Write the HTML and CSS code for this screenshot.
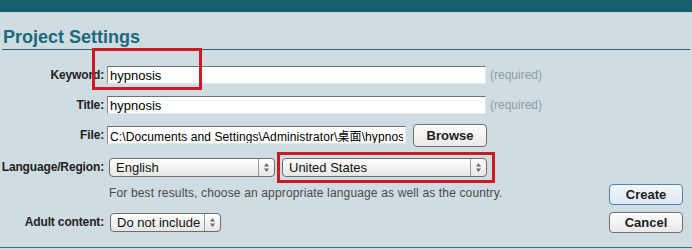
FILE: index.html
```html
<!DOCTYPE html>
<html lang="en">
<head>
    <meta charset="UTF-8">
    <title>Project Settings</title>
    <link rel="stylesheet" href="styles.css">
</head>
<body>
<div class="page">
    <div class="topbar"></div>
    <h1 class="title">Project Settings</h1>

    <div class="form">
        <div class="row">
            <label class="lbl">Keyword:</label>
            <input class="txt wide" type="text" value="hypnosis">
            <span class="req">(required)</span>
        </div>
        <div class="row">
            <label class="lbl">Title:</label>
            <input class="txt wide" type="text" value="hypnosis">
            <span class="req">(required)</span>
        </div>
        <div class="row">
            <label class="lbl">File:</label>
            <input class="txt file" type="text" value="C:\Documents and Settings\Administrator\桌面\hypnosis.html">
            <button class="btn browse">Browse</button>
        </div>
        <div class="row lang">
            <label class="lbl">Language/Region:</label>
            <div class="sel sel-lang">
                <span class="sel-text">English</span>
                <span class="sel-arrows"><svg width="7" height="11" viewBox="0 0 7 11"><path d="M3.5 1 L6 4.5 H1 Z M3.5 10 L6 6.5 H1 Z" fill="#6b6b6b"/></svg></span>
            </div>
            <div class="sel sel-region">
                <span class="sel-text">United States</span>
                <span class="sel-arrows"><svg width="7" height="11" viewBox="0 0 7 11"><path d="M3.5 1 L6 4.5 H1 Z M3.5 10 L6 6.5 H1 Z" fill="#6b6b6b"/></svg></span>
            </div>
        </div>
        <div class="row help">
            <span class="lbl"></span>
            <span class="hint">For best results, choose an appropriate language as well as the country.</span>
            <button class="btn action create">Create</button>
        </div>
        <div class="row adult">
            <label class="lbl">Adult content:</label>
            <div class="sel sel-adult">
                <span class="sel-text">Do not include</span>
                <span class="sel-arrows"><svg width="7" height="11" viewBox="0 0 7 11"><path d="M3.5 1 L6 4.5 H1 Z M3.5 10 L6 6.5 H1 Z" fill="#6b6b6b"/></svg></span>
            </div>
            <button class="btn action">Cancel</button>
        </div>
    </div>

    <div class="mark mark-keyword"></div>
    <div class="mark mark-region"></div>
</div>
</body>
</html>
```

FILE: styles.css
```css
body{
    margin: 0;
    font-family: "Liberation Sans", Arial, "Noto Sans CJK SC", sans-serif;
    background: #cfdce2;
}
.page{
    position: relative;
    height: 248px;
    box-sizing: border-box;
    border-bottom: 1px solid #3c6d78;
    background: #cfdce2;
}
.topbar{
    height: 12px;
    background: #135f6b;
    border-bottom: 1px solid #c3d6dd;
}
.title{
    margin: 13px 2px 0 2px;
    padding: 0 0 1px 1px;
    font-size: 18px;
    line-height: 22px;
    font-weight: bold;
    color: #1c6a7c;
    border-bottom: 1px solid #2f6570;
}
.form{
    padding-top: 10px;
    padding-right: 9px;
}
.row{
    display: flex;
    align-items: center;
    height: 30px;
}
.row.lang{
    height: 34px;
}
.row.help{
    height: 24px;
    align-items: flex-start;
}
.row.adult{
    height: 28px;
}
.lbl{
    width: 104px;
    flex: none;
    text-align: right;
    font-size: 12px;
    font-weight: bold;
    letter-spacing: -0.15px;
    color: #222;
    margin-right: 3px;
}
.txt{
    box-sizing: border-box;
    height: 18px;
    margin: 0;
    padding: 0 2px;
    font-family: inherit;
    font-size: 13px;
    color: #000;
    background: #fff;
    border: 1px solid #e4e8ea;
    border-top-color: #707070;
    border-left-color: #8a8a8a;
    outline: none;
}
.wide{
    width: 379px;
}
.file{
    width: 299px;
    font-size: 12px;
    letter-spacing: 0.1px;
}
.req{
    margin-left: 4px;
    font-size: 12px;
    color: #8d9ca2;
}
.btn{
    box-sizing: border-box;
    margin: 0;
    padding: 0;
    font-family: inherit;
    font-size: 13px;
    font-weight: bold;
    color: #1d1d1d;
    border: 1px solid #6f6f6f;
    border-radius: 4px;
    background: linear-gradient(#fdfdfd, #e9e9e9);
}
.browse{
    width: 74px;
    height: 23px;
    margin-left: 7px;
}
.action{
    width: 74px;
    height: 21px;
    margin-left: auto;
}
.create{
    border-color: #4f86ad;
    background: linear-gradient(#f3f7fb, #dde9f3);
}
.sel{
    box-sizing: border-box;
    display: flex;
    align-items: center;
    height: 19px;
    border: 1px solid #6e6e6e;
    border-radius: 4px;
    background: linear-gradient(#fefefe, #e6e6e6);
    font-size: 13px;
    color: #111;
}
.sel-text{
    flex: 1;
    padding-left: 6px;
    white-space: nowrap;
}
.sel-arrows{
    display: flex;
    align-items: center;
    justify-content: center;
    width: 15px;
    height: 100%;
    border-left: 1px solid #9a9a9a;
}
.sel-lang{
    width: 166px;
    margin-left: 2px;
}
.sel-region{
    width: 205px;
    margin-left: 7px;
}
.sel-adult{
    width: 111px;
    margin-left: 3px;
}
.hint{
    margin-left: 2px;
    padding-top: 2px;
    font-size: 12px;
    letter-spacing: 0.15px;
    color: #4a4a4a;
}
.mark{
    position: absolute;
    border: 3px solid #cd1a20;
    box-sizing: border-box;
}
.mark-keyword{
    left: 92px;
    top: 48px;
    width: 110px;
    height: 42px;
}
.mark-region{
    left: 277px;
    top: 152px;
    width: 218px;
    height: 31px;
}
```
